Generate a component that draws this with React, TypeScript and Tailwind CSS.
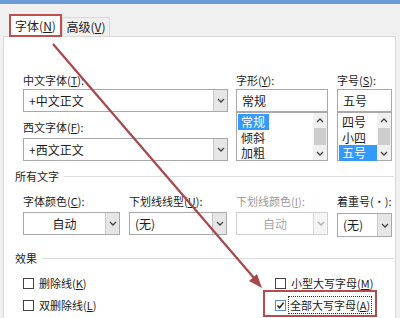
import React from "react";

const Chevron = ({ up = false, color = "#444" }: { up?: boolean; color?: string }) => (
  <svg width="8" height="5" viewBox="0 0 8 5" className={up ? "rotate-180" : ""}>
    <path d="M1 1 L4 4 L7 1" fill="none" stroke={color} strokeWidth="1.3" />
  </svg>
);

// label with underlined access key, e.g. 中文字体(T):
const Label = ({ text, k, colon = true, disabled = false }: { text: string; k: string; colon?: boolean; disabled?: boolean }) => (
  <div className={`h-[16px] leading-[16px] whitespace-nowrap ${disabled ? "text-[#9a9a9a]" : ""}`}>
    {text}(<span className="underline underline-offset-[1px]">{k}</span>){colon ? ":" : ""}
  </div>
);

const DropButton = ({ disabled = false }: { disabled?: boolean }) => (
  <div
    className={`w-[14px] h-full flex items-center justify-center border-l ${
      disabled ? "bg-[#f4f4f4] border-[#d8d8d8]" : "bg-[#e6e6e6] border-[#c8c8c8]"
    }`}
  >
    <Chevron color={disabled ? "#b0b0b0" : "#444"} />
  </div>
);

const Select = ({ value, center = false, disabled = false, h = "h-[23px]" }: { value: string; center?: boolean; disabled?: boolean; h?: string }) => (
  <div className={`${h} flex bg-white border ${disabled ? "border-[#d0d0d0]" : "border-[#a9a9a9]"}`}>
    <div
      className={`flex-1 flex items-center px-[5px] text-[12px] ${center ? "justify-center" : ""} ${
        disabled ? "text-[#a8a8a8]" : ""
      }`}
    >
      {value}
    </div>
    <DropButton disabled={disabled} />
  </div>
);

const TextBox = ({ value }: { value: string }) => (
  <div className="h-[23px] flex items-center px-[5px] bg-white border border-[#a9a9a9] text-[12px]">{value}</div>
);

const ListBox = ({ items, selected, hlWidth }: { items: string[]; selected: number; hlWidth: string }) => (
  <div className="h-[49px] flex bg-white border border-[#a9a9a9] text-[12px]">
    <div className="flex-1 pt-[1px] pl-[1px]">
      {items.map((it, i) => (
        <div key={it} className="h-[15.5px] leading-[15.5px]">
          <span className={`inline-block pl-[3px] ${hlWidth} ${i === selected ? "bg-[#3399ff] text-white" : ""}`}>{it}</span>
        </div>
      ))}
    </div>
    <div className="w-[14px] flex flex-col items-center bg-[#f0f0f0]">
      <div className="h-[14px] flex items-center">
        <Chevron up />
      </div>
      <div className="flex-1 w-[12px] bg-[#cdcdcd] my-[1px]" />
      <div className="h-[14px] flex items-center">
        <Chevron />
      </div>
    </div>
  </div>
);

const Section = ({ title }: { title: string }) => (
  <div className="flex items-center h-[16px] leading-[16px]">
    <span>{title}</span>
    <div className="flex-1 h-px bg-[#dcdcdc] ml-[5px]" />
  </div>
);

const CheckBox = ({ checked = false }: { checked?: boolean }) => (
  <div
    className={`w-[11px] h-[11px] flex items-center justify-center bg-white border ${
      checked ? "border-[#5a8fc8]" : "border-[#444]"
    }`}
  >
    {checked && (
      <svg width="9" height="9" viewBox="0 0 9 9">
        <path d="M1.5 4.5 L3.6 6.8 L7.6 1.6" fill="none" stroke="#222" strokeWidth="1.5" />
      </svg>
    )}
  </div>
);

export default function App() {
  return (
    <div className="relative w-[400px] h-[318px] overflow-hidden bg-[#f0f0f0] text-[11px] text-[#1c1c1c] font-['Noto_Sans_CJK_SC','Noto_Sans',sans-serif]">
      {/* window title strip */}
      <div className="h-[4px] bg-[#6b9bd6]" />

      {/* tabs */}
      <div className="h-[32px] flex items-end pl-[9px]">
        <div className="relative z-10 h-[23px] w-[53px] flex items-center justify-center bg-white border-2 border-[#c0504d] text-[12px] -mb-px">
          字体(<span className="underline">N</span>)
        </div>
        <div className="h-[19px] w-[48px] flex items-center justify-center bg-[#f0f0f0] border border-b-0 border-[#d9d9d9] text-[12px]">
          高级(<span className="underline">V</span>)
        </div>
      </div>

      {/* tab page */}
      <div className="ml-[3px] w-[393px] h-[290px] bg-white border border-[#d9d9d9] pt-[35px] pl-[11px] pr-[1px]">
        <div className="flex ml-[8px]">
          <div className="w-[205px]">
            <Label text="中文字体" k="T" />
            <div className="mt-[1px]">
              <Select value="+中文正文" />
            </div>
            <div className="mt-[7px]">
              <Label text="西文字体" k="F" />
            </div>
            <div className="mt-[3px]">
              <Select value="+西文正文" />
            </div>
          </div>
          <div className="w-[92px] ml-[8px]">
            <Label text="字形" k="Y" />
            <div className="mt-[1px]">
              <TextBox value="常规" />
            </div>
            <ListBox items={["常规", "倾斜", "加粗"]} selected={0} hlWidth="w-[31px]" />
          </div>
          <div className="w-[55px] ml-[9px]">
            <Label text="字号" k="S" />
            <div className="mt-[1px]">
              <TextBox value="五号" />
            </div>
            <ListBox items={["四号", "小四", "五号"]} selected={2} hlWidth="w-[38px]" />
          </div>
        </div>

        <div className="mt-[7px]">
          <Section title="所有文字" />
        </div>

        <div className="flex ml-[8px] mt-[9px]">
          <div className="w-[97px]">
            <Label text="字体颜色" k="C" />
            <div className="mt-[3px]">
              <Select value="自动" center />
            </div>
          </div>
          <div className="w-[98px] ml-[9px]">
            <Label text="下划线线型" k="U" />
            <div className="mt-[3px]">
              <Select value="(无)" />
            </div>
          </div>
          <div className="w-[92px] ml-[9px]">
            <Label text="下划线颜色" k="I" disabled />
            <div className="mt-[3px]">
              <Select value="自动" center disabled />
            </div>
          </div>
          <div className="w-[55px] ml-[9px]">
            <div className="h-[16px] leading-[16px] whitespace-nowrap">着重号(·):</div>
            <div className="mt-[4px]">
              <Select value="(无)" h="h-[24px]" />
            </div>
          </div>
        </div>

        <div className="mt-[13px]">
          <Section title="效果" />
        </div>

        <div className="flex ml-[8px] mt-[9px]">
          <div className="w-[252px] flex flex-col gap-[6px]">
            <div className="flex items-center h-[16px] gap-[5px]">
              <CheckBox />
              <Label text="删除线" k="K" colon={false} />
            </div>
            <div className="flex items-center h-[16px] gap-[5px]">
              <CheckBox />
              <Label text="双删除线" k="L" colon={false} />
            </div>
          </div>
          <div className="flex flex-col gap-[6px]">
            <div className="flex items-center h-[16px] gap-[4px]">
              <CheckBox />
              <div className="pl-[1px]">
                <Label text="小型大写字母" k="M" colon={false} />
              </div>
            </div>
            <div className="flex items-center h-[16px] gap-[2px]">
              <CheckBox checked />
              <div className="border border-dotted border-[#333] px-[1px]">
                <Label text="全部大写字母" k="A" colon={false} />
              </div>
            </div>
          </div>
        </div>
      </div>

      {/* annotation: box around 全部大写字母 */}
      <div className="absolute left-[263px] top-[290px] w-[114px] h-[27px] border-2 border-[#b84a4d]" />

      {/* annotation: arrow from tab to checkbox */}
      <svg className="absolute left-0 top-0 pointer-events-none" width="400" height="318" viewBox="0 0 400 318">
        <line x1="53" y1="44" x2="254" y2="278" stroke="#a8474b" strokeWidth="2.2" />
        <polygon points="262,288 249,281 257,274" fill="#a8474b" />
      </svg>
    </div>
  );
}
